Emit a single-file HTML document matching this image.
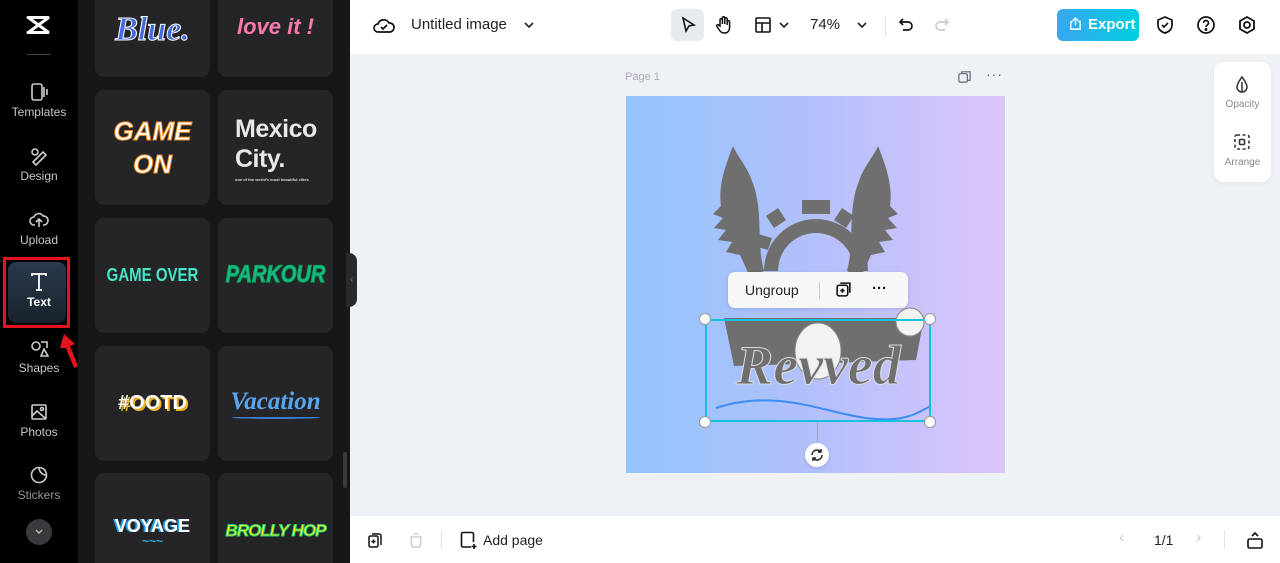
<!DOCTYPE html>
<html><head><meta charset="utf-8"><style>
*{box-sizing:border-box;margin:0;padding:0}
body{width:1280px;height:563px;overflow:hidden;font-family:"Liberation Sans",sans-serif;background:#eff2f5;position:relative}
.abs{position:absolute}
#side{left:0;top:0;width:78px;height:563px;background:#000}
.si{position:absolute;left:0;width:78px;text-align:center;color:#c8c8cc;font-size:12px}
.si svg{display:block;margin:0 auto 3px}
#panel{left:78px;top:0;width:272px;height:563px;background:#17171a;overflow:hidden}
.card{position:absolute;width:115px;height:115px;background:#252528;border-radius:9px;display:flex;align-items:center;justify-content:center;text-align:center;font-weight:bold}
#top{left:350px;top:0;width:930px;height:54px;background:#fff}
#bot{left:350px;top:516px;width:930px;height:47px;background:#fff}
.ic{position:absolute}
</style></head><body>
<div id="side" class="abs">
 <svg class="ic" style="left:26px;top:15px" width="26" height="20" viewBox="0 0 26 20"><path d="M2 2.5h20M2 17.5h20M3 3l19 14M3 17L22 3" fill="none" stroke="#fff" stroke-width="3" stroke-linecap="round"/></svg>
 <div class="abs" style="left:27px;top:54px;width:24px;height:1px;background:#444"></div>
 <div class="si" style="top:82px"><svg width="20" height="20" viewBox="0 0 20 20" fill="none" stroke="#ccc" stroke-width="1.6"><rect x="3" y="2" width="10" height="16" rx="2"/><path d="M15 5v10M18 7v6"/></svg>Templates</div>
 <div class="si" style="top:146px"><svg width="20" height="20" viewBox="0 0 20 20" fill="none" stroke="#ccc" stroke-width="1.6"><circle cx="6" cy="6" r="3"/><path d="M4 16l10-10 3 3-10 10z"/></svg>Design</div>
 <div class="si" style="top:210px"><svg width="20" height="20" viewBox="0 0 20 20" fill="none" stroke="#ccc" stroke-width="1.6"><path d="M6 15H5a4 4 0 010-8 5 5 0 019-1 4 4 0 011 9h-1M10 9v8M7 12l3-3 3 3"/></svg>Upload</div>
 <div class="abs" style="left:3px;top:257px;width:67px;height:71px;border:3px solid #e5141c"></div>
 <div class="abs" style="left:8px;top:262px;width:58px;height:61px;border-radius:8px;background:linear-gradient(#2a3a4c,#18222c)"></div>
 <div class="si" style="top:272px;color:#fff;font-weight:bold"><svg width="20" height="20" viewBox="0 0 20 20" fill="none" stroke="#fff" stroke-width="1.8"><path d="M3 4V2h14v2M10 2v16M7 18h6"/></svg>Text</div>
 <svg class="ic" style="left:58px;top:332px" width="22" height="38" viewBox="0 0 22 38"><path d="M6 2l-4 14h6l8 20 4-2-8-20 5-2z" fill="#e5141c"/></svg>
 <div class="si" style="top:338px"><svg width="20" height="20" viewBox="0 0 20 20" fill="none" stroke="#ccc" stroke-width="1.6"><circle cx="7" cy="8" r="4"/><path d="M12 4h6v6M12 18l3-7 4 7z"/></svg>Shapes</div>
 <div class="si" style="top:402px"><svg width="20" height="20" viewBox="0 0 20 20" fill="none" stroke="#ccc" stroke-width="1.6"><rect x="3" y="3" width="14" height="14" rx="1"/><path d="M3 14l5-5 9 8"/><circle cx="13" cy="7" r="1.5"/></svg>Photos</div>
 <div class="si" style="top:465px;color:#999"><svg width="20" height="20" viewBox="0 0 20 20" fill="none" stroke="#ccc" stroke-width="1.6"><circle cx="10" cy="10" r="7.5"/><path d="M17.5 10a7.5 7.5 0 01-7.5-7.5c0 4 3 7.5 7.5 7.5z"/></svg>Stickers</div>
 <div class="abs" style="left:26px;top:519px;width:26px;height:26px;border-radius:50%;background:#3a3a3e"></div>
 <svg class="ic" style="left:33px;top:527px" width="12" height="10" viewBox="0 0 12 10" fill="none" stroke="#bbb" stroke-width="1.4"><path d="M3 3l3 3 3-3"/></svg>
</div>
<div id="panel" class="abs">
 <div class="card" style="left:17px;top:-38px"><span style="font-family:'Liberation Serif';font-style:italic;font-size:34px;color:#4169e1;-webkit-text-stroke:1px #fff;margin-top:20px">Blue.</span></div>
 <div class="card" style="left:140px;top:-38px"><span style="font-style:italic;font-size:22px;color:#ff79b0;margin-top:15px">love it !</span></div>
 <div class="card" style="left:17px;top:90px"><span style="font-style:italic;font-size:26px;line-height:33px;color:#fff;-webkit-text-stroke:1px #f08a1c">GAME<br>ON</span></div>
 <div class="card" style="left:140px;top:90px;flex-direction:column;align-items:flex-start;padding-left:17px"><span style="font-size:25px;line-height:30px;color:#e8e8e4;text-align:left;letter-spacing:-0.5px">Mexico<br>City.</span><span style="font-size:4px;color:#ddd;margin-top:3px">one of the world's most beautiful cities</span></div>
 <div class="card" style="left:17px;top:218px"><span style="font-size:15px;color:#45e6c8;transform:scaleY(1.2)">GAME OVER</span></div>
 <div class="card" style="left:140px;top:218px"><span style="font-style:italic;font-size:20px;color:#1fb892;-webkit-text-stroke:1px #0a5;transform:scaleY(1.2)">PARKOUR</span></div>
 <div class="card" style="left:17px;top:346px"><span style="font-size:20px;color:#fff;text-shadow:2px 2px 0 #f3b21a">#OOTD</span></div>
 <div class="card" style="left:140px;top:346px;flex-direction:column"><span style="font-family:'Liberation Serif';font-style:italic;font-size:25px;color:#58a6f0">Vacation</span><div style="width:88px;height:3px;border-bottom:2px solid #3b7bd0;border-radius:50%"></div></div>
 <div class="card" style="left:17px;top:473px;flex-direction:column"><span style="font-size:18px;color:#fff;text-shadow:-2px 0 0 #1e9ee8">VOYAGE</span><span style="color:#3ad;font-size:12px;line-height:8px">~~~</span></div>
 <div class="card" style="left:140px;top:473px"><span style="font-style:italic;font-size:17px;color:#f4f020;-webkit-text-stroke:1px #2c7;letter-spacing:-1px">BROLLY HOP</span></div>
 <div class="abs" style="left:265px;top:452px;width:4px;height:36px;background:#3a3a3e;border-radius:2px"></div>
</div>
<div class="abs" style="left:346px;top:253px;width:11px;height:54px;background:#2a2a2e;border-radius:0 8px 8px 0;color:#777;font-size:10px;line-height:54px;text-align:center">‹</div>
<div id="top" class="abs">
 <svg class="ic" style="left:23px;top:15px" width="22" height="22" viewBox="0 0 22 22" fill="none" stroke="#111" stroke-width="1.7"><path d="M6 17H5a4 4 0 010-8 6 6 0 0111-1 4.5 4.5 0 011 9z"/><path d="M8 12l2 2 4-4"/></svg>
 <div class="abs" style="left:61px;top:16px;font-size:15px;color:#222">Untitled image</div>
 <svg class="ic" style="left:173px;top:19px" width="12" height="12" viewBox="0 0 12 12" fill="none" stroke="#222" stroke-width="1.6"><path d="M2 4l4 4 4-4"/></svg>
 <div class="abs" style="left:321px;top:9px;width:33px;height:32px;border-radius:6px;background:#e6ebf0"></div>
 <svg class="ic" style="left:329px;top:16px" width="18" height="18" viewBox="0 0 18 18" fill="none" stroke="#111" stroke-width="1.6"><path d="M4 2l11 7-5 1-3 5z"/></svg>
 <svg class="ic" style="left:364px;top:15px" width="20" height="20" viewBox="0 0 20 20" fill="none" stroke="#111" stroke-width="1.5"><path d="M6 11V5a1.2 1.2 0 012.4 0v4V3a1.2 1.2 0 012.4 0v6V4a1.2 1.2 0 012.4 0v6V7a1.2 1.2 0 012.4 0v5c0 4-2 6-5 6s-4-1-6-4l-2-3a1.2 1.2 0 012-1z"/></svg>
 <svg class="ic" style="left:404px;top:16px" width="18" height="18" viewBox="0 0 18 18" fill="none" stroke="#111" stroke-width="1.6"><rect x="2" y="2" width="14" height="14" rx="1"/><path d="M2 7h14M8 7v9"/></svg>
 <svg class="ic" style="left:428px;top:19px" width="12" height="12" viewBox="0 0 12 12" fill="none" stroke="#222" stroke-width="1.6"><path d="M2 4l4 4 4-4"/></svg>
 <div class="abs" style="left:460px;top:16px;font-size:15px;color:#222">74%</div>
 <svg class="ic" style="left:506px;top:19px" width="12" height="12" viewBox="0 0 12 12" fill="none" stroke="#222" stroke-width="1.6"><path d="M2 4l4 4 4-4"/></svg>
 <div class="abs" style="left:535px;top:16px;width:1px;height:20px;background:#e0e0e0"></div>
 <svg class="ic" style="left:547px;top:16px" width="18" height="18" viewBox="0 0 18 18" fill="none" stroke="#111" stroke-width="1.7"><path d="M6 3L3 6l3 3M3 6h8a4 4 0 010 8H6"/></svg>
 <svg class="ic" style="left:583px;top:16px" width="18" height="18" viewBox="0 0 18 18" fill="none" stroke="#ccc" stroke-width="1.7"><path d="M12 3l3 3-3 3M15 6H7a4 4 0 000 8h5"/></svg>
 <div class="abs" style="left:707px;top:9px;width:82px;height:32px;border-radius:6px;background:linear-gradient(90deg,#3aa6f0,#00cfe0);color:#fff;font-weight:bold;font-size:15px;line-height:32px;padding-left:31px">Export</div>
 <svg class="ic" style="left:718px;top:16px" width="15" height="15" viewBox="0 0 16 16" fill="none" stroke="#fff" stroke-width="1.5"><path d="M5 6H3v8h10V6h-2M8 10V2M5 5l3-3 3 3"/></svg>
 <svg class="ic" style="left:805px;top:15px" width="20" height="20" viewBox="0 0 20 20" fill="none" stroke="#111" stroke-width="1.7"><path d="M10 2l7 3v5c0 4-3 7-7 8-4-1-7-4-7-8V5z"/><path d="M7 10l2 2 4-4"/></svg>
 <svg class="ic" style="left:846px;top:15px" width="20" height="20" viewBox="0 0 20 20" fill="none" stroke="#111" stroke-width="1.7"><circle cx="10" cy="10" r="8"/><path d="M7.5 8a2.5 2.5 0 115 0c0 2-2.5 2-2.5 4"/><circle cx="10" cy="14.5" r=".6" fill="#111"/></svg>
 <svg class="ic" style="left:887px;top:15px" width="20" height="20" viewBox="0 0 20 20" fill="none" stroke="#111" stroke-width="1.8"><path d="M10 2l7 4v8l-7 4-7-4V6z"/><circle cx="10" cy="10" r="3"/></svg>
</div>
<div class="abs" style="left:625px;top:71px;font-size:11px;color:#aab">Page 1</div>
<svg class="ic" style="left:957px;top:69px" width="15" height="15" viewBox="0 0 16 16" fill="none" stroke="#667" stroke-width="1.3"><rect x="2" y="5" width="9" height="9" rx="1.5"/><path d="M5 5V3h9v9h-3"/></svg>
<div class="abs" style="left:986px;top:66px;font-size:14px;color:#667;letter-spacing:1px">···</div>
<div class="abs" style="left:1214px;top:62px;width:57px;height:120px;background:#fff;border-radius:10px;box-shadow:0 1px 6px rgba(0,0,0,.06)"></div>
<svg class="ic" style="left:1233px;top:75px" width="18" height="20" viewBox="0 0 18 20" fill="none" stroke="#333" stroke-width="1.5"><path d="M9 2c3 4 5 7 5 10a5 5 0 01-10 0c0-3 2-6 5-10z"/><path d="M9 7v10" /></svg>
<div class="abs" style="left:1214px;top:99px;width:57px;text-align:center;font-size:10px;color:#888">Opacity</div>
<svg class="ic" style="left:1233px;top:133px" width="18" height="18" viewBox="0 0 18 18" fill="none" stroke="#333" stroke-width="1.6"><rect x="2" y="2" width="14" height="14" rx="2" stroke-dasharray="3 2.5"/><rect x="6.5" y="6.5" width="5" height="5" rx="1"/></svg>
<div class="abs" style="left:1214px;top:157px;width:57px;text-align:center;font-size:10px;color:#888">Arrange</div>
<div class="abs" style="left:626px;top:96px;width:379px;height:377px;background:linear-gradient(90deg,#93c5fc,#b3c0fb 50%,#ddc5fb)"></div>
<svg class="ic" style="left:626px;top:96px" width="379" height="377" viewBox="0 0 379 377">
 <g fill="#6f6f70">
  <path d="M107 50c-8 20-15 40-12 60l-8 8 10 4-9 10 12 2-8 10 14 2-6 10 14 3 10 22 14-6c-8-30 0-60-12-90-5-15-15-25-19-35z"/>
  <path d="M252 50c8 20 15 40 12 60l8 8-10 4 9 10-12 2 8 10-14 2 6 10-14 3-10 22-14-6c8-30 0-60 12-90 5-15 15-25 19-35z"/>
  <path d="M138 175a52 52 0 01104 0h-14a38 38 0 00-76 0z"/>
  <path d="M176 104h28v14h-28zM140 120l12-8 8 12-12 8zM228 120l-12-8-8 12 12 8zM128 150l4-12 14 4-4 12zM250 150l-4-12-14 4 4 12z"/>
  <path d="M98 222h200l-8 42-182 6z"/>
 </g>
 <ellipse cx="192" cy="255" rx="23" ry="28" fill="#f2f2f0" stroke="#888"/>
 <ellipse cx="284" cy="226" rx="14" ry="14" fill="#f2f2f0" stroke="#888"/>
 <text x="110" y="288" font-family="Liberation Serif" font-style="italic" font-weight="bold" font-size="56" fill="#6f6f70" stroke="#ddd" stroke-width="1">Revved</text>
 <path d="M90 312c60-20 110 5 150 10s50-5 65-12" fill="none" stroke="#3b8cf5" stroke-width="2"/>
</svg>
<div class="abs" style="left:705px;top:319px;width:226px;height:103px;border:2px solid #13c2de"></div>
<div class="abs" style="left:817px;top:422px;width:1px;height:20px;background:#9ab"></div>
<div class="abs" style="left:699px;top:313px;width:12px;height:12px;border-radius:50%;background:#fff;border:1px solid #999"></div>
<div class="abs" style="left:924px;top:313px;width:12px;height:12px;border-radius:50%;background:#fff;border:1px solid #999"></div>
<div class="abs" style="left:699px;top:416px;width:12px;height:12px;border-radius:50%;background:#fff;border:1px solid #999"></div>
<div class="abs" style="left:924px;top:416px;width:12px;height:12px;border-radius:50%;background:#fff;border:1px solid #999"></div>
<div class="abs" style="left:805px;top:443px;width:24px;height:24px;border-radius:50%;background:#fff;box-shadow:0 1px 3px rgba(0,0,0,.15)"></div>
<svg class="ic" style="left:810px;top:448px" width="14" height="14" viewBox="0 0 14 14" fill="none" stroke="#222" stroke-width="1.5"><path d="M2 7a5 5 0 019-3M12 7a5 5 0 01-9 3M11 1v3H8M3 13v-3h3"/></svg>
<div class="abs" style="left:728px;top:272px;width:180px;height:36px;background:#f7f7f8;border-radius:7px;box-shadow:0 1px 4px rgba(0,0,0,.12)"></div>
<div class="abs" style="left:745px;top:282px;font-size:14px;color:#222">Ungroup</div>
<div class="abs" style="left:819px;top:282px;width:1px;height:17px;background:#ccc"></div>
<svg class="ic" style="left:835px;top:281px" width="17" height="17" viewBox="0 0 16 16" fill="none" stroke="#111" stroke-width="1.5"><rect x="2" y="4" width="10" height="10" rx="2"/><path d="M5 2h9v9M7 7v4M5 9h4"/></svg>
<div class="abs" style="left:872px;top:280px;font-size:15px;color:#111;font-weight:bold">···</div>
<div id="bot" class="abs">
 <svg class="ic" style="left:17px;top:16px" width="16" height="17" viewBox="0 0 16 17" fill="none" stroke="#111" stroke-width="1.5"><rect x="2" y="4" width="9" height="11" rx="1.5"/><path d="M5 2h7a2 2 0 012 2v9M6.5 7.5v4M4.5 9.5h4"/></svg>
 <svg class="ic" style="left:58px;top:16px" width="16" height="17" viewBox="0 0 16 17" fill="none" stroke="#ccd" stroke-width="1.4"><path d="M3 5h10l-1 10H4zM6 3l2-2 2 2"/></svg>
 <div class="abs" style="left:91px;top:14px;width:1px;height:19px;background:#e3e3e3"></div>
 <svg class="ic" style="left:109px;top:15px" width="19" height="19" viewBox="0 0 19 19" fill="none" stroke="#111" stroke-width="1.6"><path d="M12 16H4a1.5 1.5 0 01-1.5-1.5V3A1.5 1.5 0 014 1.5h9A1.5 1.5 0 0114.5 3v8M15 13v5M12.5 15.5h5"/></svg>
 <div class="abs" style="left:133px;top:16px;font-size:14px;color:#222">Add page</div>
 <div class="abs" style="left:769px;top:13px;font-size:16px;color:#ccc">&#x2039;</div>
 <div class="abs" style="left:804px;top:16px;font-size:14px;color:#222">1/1</div>
 <div class="abs" style="left:846px;top:13px;font-size:16px;color:#ccc">&#x203A;</div>
 <div class="abs" style="left:874px;top:14px;width:1px;height:19px;background:#e3e3e3"></div>
 <svg class="ic" style="left:896px;top:14px" width="18" height="20" viewBox="0 0 18 20" fill="none" stroke="#111" stroke-width="1.6"><rect x="2" y="9" width="14" height="9" rx="1.5"/><path d="M6 6l3-3 3 3"/></svg>
</div>
</body></html>
